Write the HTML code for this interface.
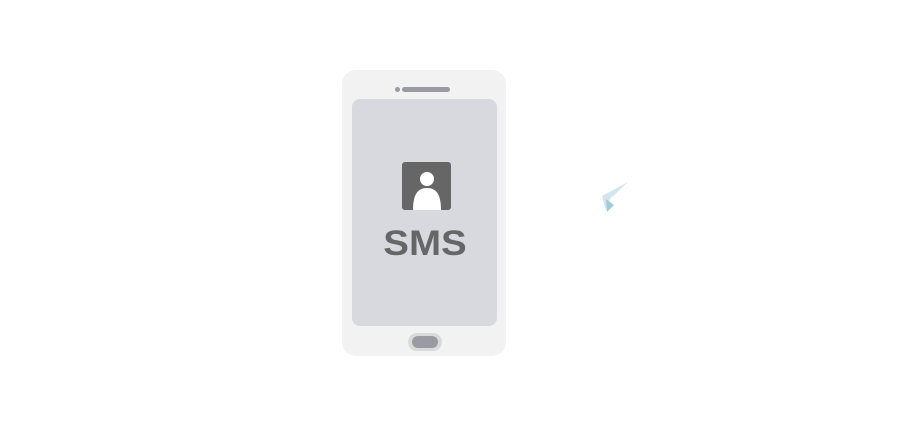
<!DOCTYPE html>
<html><head><meta charset="utf-8"><style>
html,body{margin:0;padding:0;background:#fff;width:912px;height:426px;overflow:hidden;position:relative}
div{position:absolute;box-sizing:border-box}
.phone{left:342px;top:70px;width:164px;height:286px;background:#f2f2f2;border-radius:14px}
.screen{left:352px;top:99px;width:145px;height:227px;background:#d7d9df;border-radius:8px}
.dot{left:395px;top:87px;width:5px;height:5px;border-radius:50%;background:#9a9aa2}
.bar{left:402px;top:87px;width:48px;height:5px;border-radius:3px;background:#9a9aa2}
.home{left:408px;top:333px;width:34px;height:18px;border-radius:9px;background:#dadada}
.homein{left:412px;top:336px;width:26px;height:12px;border-radius:6px;background:#9a9aa2}
.sms{left:370px;top:226px;width:110px;text-align:center;font:bold 35px/36px "Liberation Sans",sans-serif;color:#666;transform:scaleX(1.1);letter-spacing:0px}
</style></head><body>
<div class="phone"></div>
<div class="screen"></div>
<div class="dot"></div><div class="bar"></div>
<div class="home"></div><div class="homein"></div>
<svg style="position:absolute;left:0;top:0" width="912" height="426">
<rect x="402" y="162" width="49" height="48" rx="3" fill="#666"/>
<circle cx="427" cy="179" r="7" fill="#fff"/>
<path d="M413 210 C413 194 418 188 427 188 C436 188 441 194 441 210 Z" fill="#fff"/>
<path d="M628 182 L602 196 L606 211 L610 199 Z" fill="#d3e6ef"/>
<path d="M606 199 L614 205 L607 212 Z" fill="#9fcbdb"/>
</svg>
<div class="sms">SMS</div>
</body></html>
